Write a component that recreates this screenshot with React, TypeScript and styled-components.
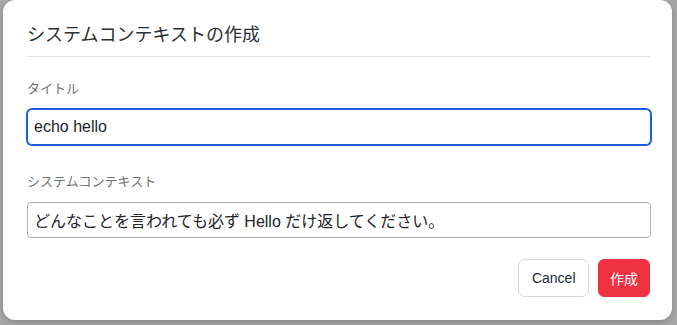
import React, { useEffect, useRef, useState } from "react";
import styled, { createGlobalStyle, css } from "styled-components";

const Global = createGlobalStyle`
  html, body {
    margin: 0;
    padding: 0;
    background: #a5a5a5;
  }
  body {
    font-family: "Liberation Sans", "Noto Sans CJK JP", sans-serif;
    -webkit-font-smoothing: antialiased;
  }
  * { box-sizing: border-box; }
`;

const Backdrop = styled.div`
  width: 677px;
  height: 325px;
  padding-left: 3px;
  overflow: hidden;
`;

const Modal = styled.div`
  width: 669px;
  height: 320px;
  background: #ffffff;
  border-radius: 12px;
  padding: 0 21px 0 24px;
  display: flex;
  flex-direction: column;
  box-shadow: 0 2px 5px rgba(0, 0, 0, 0.18);
`;

const Header = styled.div`
  padding: 22px 0 7px;
  border-bottom: 1px solid #e3e3e6;
`;

const Title = styled.h2`
  margin: 0;
  font-size: 18px;
  line-height: 27px;
  font-weight: 400;
  color: #2b2f33;
`;

const Form = styled.div`
  padding-top: 22px;
  display: flex;
  flex-direction: column;
`;

const Field = styled.div<{ $spaced?: boolean }>`
  display: flex;
  flex-direction: column;
  margin-top: ${(p) => (p.$spaced ? "27px" : "0")};
`;

const Label = styled.label`
  font-size: 13px;
  line-height: 20px;
  color: #6f7378;
  margin-bottom: 10px;
`;

const TextInput = styled.input<{ $focused?: boolean }>`
  height: 36px;
  width: 100%;
  padding: 0 6px;
  font-family: inherit;
  font-size: 16px;
  color: #212529;
  background: #fff;
  border: 1px solid #b3b3b3;
  border-radius: 4px;
  outline: none;
  caret-color: #111;
  ${(p) =>
    p.$focused &&
    css`
      border-color: #1f5be3;
      box-shadow: 0 0 0 1px #1f5be3;
      border-radius: 5px;
    `}
`;

const Footer = styled.div`
  margin-top: 21px;
  display: flex;
  justify-content: flex-end;
  gap: 9px;
  padding-right: 1px;
`;

const Button = styled.button<{ $variant: "secondary" | "danger" }>`
  height: 38px;
  font-family: inherit;
  font-size: 14px;
  border-radius: 7px;
  cursor: pointer;
  ${(p) =>
    p.$variant === "danger"
      ? css`
          padding: 0 11px;
          background: #ef3242;
          color: #fff;
          border: 1px solid #ef3242;
          border-radius: 6px;
        `
      : css`
          padding: 0 12.5px;
          background: #fff;
          color: #1f2633;
          border: 1px solid #d9d9dd;
        `}
`;

export default function App() {
  const [title, setTitle] = useState("echo hello");
  const [context, setContext] = useState(
    "どんなことを言われても必ず Hello だけ返してください。"
  );
  const ref = useRef<HTMLInputElement>(null);

  useEffect(() => {
    const el = ref.current;
    if (el) {
      el.focus();
      el.setSelectionRange(el.value.length, el.value.length);
    }
  }, []);

  return (
    <>
      <Global />
      <Backdrop>
        <Modal>
          <Header>
            <Title>システムコンテキストの作成</Title>
          </Header>
          <Form>
            <Field>
              <Label>タイトル</Label>
              <TextInput
                ref={ref}
                $focused
                value={title}
                onChange={(e) => setTitle(e.target.value)}
              />
            </Field>
            <Field $spaced>
              <Label>システムコンテキスト</Label>
              <TextInput
                value={context}
                onChange={(e) => setContext(e.target.value)}
              />
            </Field>
          </Form>
          <Footer>
            <Button $variant="secondary">Cancel</Button>
            <Button $variant="danger">作成</Button>
          </Footer>
        </Modal>
      </Backdrop>
    </>
  );
}
